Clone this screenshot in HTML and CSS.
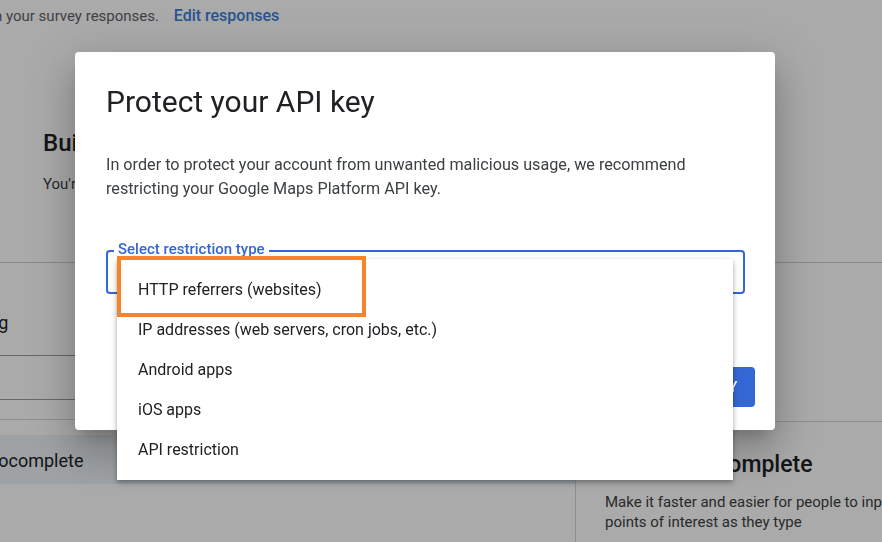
FILE: index.html
```html
<!DOCTYPE html>
<html lang="en">
<head>
    <meta charset="UTF-8">
    <title>Protect your API key</title>
    <link rel="stylesheet" href="styles.css">
</head>
<body>
    <div class="page">
        <div class="notice">
            <span class="notice-text">n your survey responses.</span>
            <a class="notice-link" href="#">Edit responses</a>
        </div>
        <div class="intro">
            <h2 class="intro-title">Build with Google Maps Platform</h2>
            <p class="intro-text">You're all set to start building with the APIs.</p>
        </div>
        <div class="columns">
            <nav class="sidebar">
                <div class="nav-group">Geocoding</div>
                <div class="nav-item"></div>
                <div class="nav-item nav-item-thin"></div>
                <div class="nav-item nav-item-active">Place Autocomplete</div>
            </nav>
            <section class="cards">
                <div class="card">
                    <h3 class="card-title">Place Autocomplete</h3>
                    <p class="card-text">Make it faster and easier for people to input addresses and points of interest as they type</p>
                </div>
            </section>
        </div>
    </div> <!-- end page -->

    <div class="scrim"></div>

    <div class="dialog">
        <h1 class="dialog-title">Protect your API key</h1>
        <p class="dialog-text">In order to protect your account from unwanted malicious usage, we recommend restricting your Google Maps Platform API key.</p>
        <div class="field">
            <span class="field-label">Select restriction type</span>
        </div>
        <div class="dialog-actions">
            <button class="btn-primary">RESTRICT KEY</button>
        </div>
    </div>

    <ul class="menu">
        <li class="menu-item">HTTP referrers (websites)</li>
        <li class="menu-item">IP addresses (web servers, cron jobs, etc.)</li>
        <li class="menu-item">Android apps</li>
        <li class="menu-item">iOS apps</li>
        <li class="menu-item">API restriction</li>
    </ul>
    <div class="highlight"></div>
</body>
</html>
```

FILE: styles.css
```css
body{
    margin: 0;
    font-family: Roboto, "Noto Sans", sans-serif;
    color: #202124;
    background: #fff;
    overflow: hidden;
}

/* page under the scrim */
.page{
    width: 882px;
    height: 542px;
    overflow: hidden;
}
.notice{
    height: 32px;
    line-height: 32px;
    font-size: 15px;
    white-space: nowrap;
    margin-left: -6px;
}
.notice-text{
    color: #5f6368;
}
.notice-link{
    margin-left: 11px;
    font-size: 16px;
    color: #3c7fd6;
    font-weight: 500;
    text-decoration: none;
}
.intro{
    padding: 95px 0 0 43px;
    height: 135px;
    border-bottom: 1px solid #d0d0d0;
}
.intro-title{
    margin: 0;
    font-size: 24px;
    line-height: 32px;
    font-weight: 500;
}
.intro-text{
    margin: 13px 0 0;
    font-size: 15px;
    line-height: 24px;
    color: #3c4043;
}
.columns{
    display: grid;
    grid-template-columns: 575px 1fr;
}
.sidebar{
    margin-left: -78px;
}
.nav-group{
    padding: 48px 0 20px;
    font-size: 18px;
    line-height: 24px;
    border-bottom: 1px solid #a29999;
}
.nav-item{
    height: 43px;
    border-bottom: 1px solid #a29999;
}
.nav-item-thin{
    height: 19px;
    border-bottom-color: #d6d6d6;
}
.nav-item-active{
    margin-top: 15px;
    height: 49px;
    line-height: 52px;
    font-size: 18px;
    background: #eef3f8;
    border-bottom: none;
}
.cards{
    padding-top: 158px;
}
.card{
    border-top: 1px solid #d6d6d6;
    border-left: 1px solid #d6d6d6;
    height: 200px;
    padding: 28px 0 0 29px;
}
.card-title{
    margin: 0;
    font-size: 23px;
    line-height: 30px;
    font-weight: 500;
}
.card-text{
    margin: 12px 0 0;
    font-size: 15px;
    line-height: 20px;
    color: #3c4043;
    width: 420px;
}

/* modal */
.scrim{
    position: fixed;
    inset: 0;
    background: rgba(0, 0, 0, 0.335);
}
.dialog{
    position: absolute;
    left: 75px;
    top: 52px;
    width: 700px;
    height: 378px;
    box-sizing: border-box;
    padding: 28px 20px 0 31px;
    background: #fff;
    border-radius: 4px;
    box-shadow: 0 11px 15px -7px rgba(0,0,0,.2),
        0 24px 38px 3px rgba(0,0,0,.14),
        0 9px 46px 8px rgba(0,0,0,.12);
}
.dialog-title{
    margin: 0;
    font-size: 30px;
    line-height: 44px;
    font-weight: 400;
    color: #202124;
}
.dialog-text{
    margin: 29px 0 0;
    width: 640px;
    font-size: 16.2px;
    line-height: 24px;
    color: #3c4043;
}
.field{
    position: relative;
    margin-top: 49px;
    width: 639px;
    height: 44px;
    box-sizing: border-box;
    border: 2px solid #3367d6;
    border-radius: 4px;
}
.field-label{
    position: absolute;
    top: -11px;
    left: 6px;
    padding: 0 4px;
    background: #fff;
    font-size: 15px;
    line-height: 16px;
    font-weight: 500;
    color: #3367d6;
}
.dialog-actions{
    display: flex;
    justify-content: flex-end;
    margin-top: 73px;
}
.btn-primary{
    height: 40px;
    padding: 0 17px;
    border: none;
    border-radius: 4px;
    background: #3367d6;
    color: #fff;
    font: 500 15px Roboto, sans-serif;
    letter-spacing: 0.5px;
}

/* dropdown */
.menu{
    position: absolute;
    left: 117px;
    top: 259px;
    width: 616px;
    margin: 0;
    padding: 11px 0 10px;
    list-style: none;
    background: #fff;
    box-shadow: 0 3px 6px rgba(0,0,0,.28), 0 1px 3px rgba(0,0,0,.12);
}
.menu-item{
    height: 40px;
    line-height: 40px;
    padding-left: 21px;
    font-size: 16px;
    color: #202124;
}
.highlight{
    position: absolute;
    left: 117px;
    top: 256px;
    width: 249px;
    height: 61px;
    box-sizing: border-box;
    border: 4px solid #f7832b;
}
```
